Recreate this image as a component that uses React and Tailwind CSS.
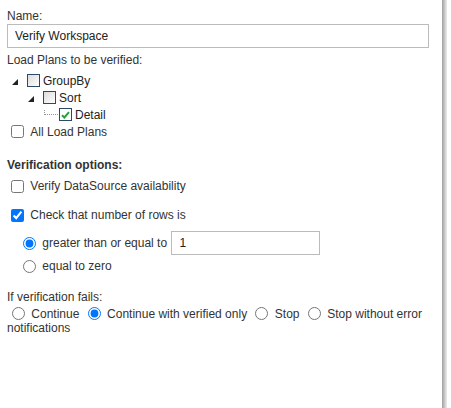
import React from "react";

const TreeBox = ({ checked }) => (
  <span
    className={`relative inline-flex h-[13px] w-[13px] shrink-0 items-center justify-center border border-[#2b4a6b] ${
      checked ? "bg-white" : "bg-gradient-to-br from-[#dcdcdc] to-[#ffffff]"
    }`}
  >
    {checked && (
      <svg width="9" height="8" viewBox="0 0 9 8">
        <path d="M1 4.2 L3.4 6.5 L8 1.2" fill="none" stroke="#22a33a" strokeWidth="2" />
      </svg>
    )}
  </span>
);

const Arrow = () => (
  <svg width="6" height="6" viewBox="0 0 6 6" className="shrink-0">
    <path d="M6 0 L6 6 L0 6 Z" fill="#222" />
  </svg>
);

const App = () => {
  return (
    <div className="flex h-[408px] w-[451px] bg-white font-['Liberation_Sans',Arial,sans-serif] text-[12px] leading-[14px] text-[#333]">
      {/* Form content */}
      <div className="w-[442px] px-[7px] pt-[9px]">
        <div>Name:</div>
        <input
          type="text"
          defaultValue="Verify Workspace"
          className="mt-px h-[24px] w-[422px] border border-[#bbb] px-[7px] text-[12px] text-[#222] outline-none"
        />

        <div className="mt-[5px]">Load Plans to be verified:</div>

        {/* Tree */}
        <div className="mt-[5px]">
          <div className="flex h-[17px] items-center pl-[5px]">
            <span className="mt-[3px] mr-[9px]"><Arrow /></span>
            <TreeBox />
            <span className="ml-[3px] text-[#222]">GroupBy</span>
          </div>
          <div className="flex h-[17px] items-center pl-[21px]">
            <span className="mt-[3px] mr-[9px]"><Arrow /></span>
            <TreeBox />
            <span className="ml-[3px] text-[#222]">Sort</span>
          </div>
          <div className="flex h-[17px] items-center pl-[37px]">
            <span className="mb-[4px] mr-px h-[5px] w-[14px] border-b border-l border-dotted border-[#999]" />
            <TreeBox checked />
            <span className="ml-[3px] text-[#222]">Detail</span>
          </div>
        </div>

        <label className="flex h-[17px] items-center">
          <input type="checkbox" className="m-[3px_3px_3px_4px] h-[13px] w-[13px]" />
          &nbsp;All Load Plans
        </label>

        <div className="mt-[18px] font-bold">Verification options:</div>

        <label className="mt-[6px] flex h-[16px] items-center">
          <input type="checkbox" className="m-[3px_3px_3px_4px] h-[13px] w-[13px]" />
          &nbsp;Verify DataSource availability
        </label>

        <label className="mt-[13px] flex h-[16px] items-center">
          <input type="checkbox" defaultChecked className="m-[3px_3px_3px_4px] h-[13px] w-[13px]" />
          &nbsp;Check that number of rows is
        </label>

        <div className="mt-[8px] flex h-[24px] items-center pl-[11px]">
          <input type="radio" name="cmp" defaultChecked className="m-[0_3px_0_5px] h-[13px] w-[13px]" />
          &nbsp;greater than or equal to&nbsp;
          <input
            type="text"
            defaultValue="1"
            className="ml-px h-[24px] w-[149px] border border-[#bbb] px-[7px] text-[12px] text-[#222] outline-none"
          />
        </div>

        <label className="mt-[3px] flex h-[16px] items-center pl-[11px]">
          <input type="radio" name="cmp" className="m-[0_3px_0_5px] h-[13px] w-[13px]" />
          &nbsp;equal to zero
        </label>

        <div className="mt-[16px]">If verification fails:</div>
        <div className="mt-[3px] pr-[8px]">
          <input type="radio" name="fail" className="m-[0_3px_0_5px] h-[13px] w-[13px] align-[-2px]" /> Continue{" "}
          <input type="radio" name="fail" defaultChecked className="m-[0_3px_0_5px] h-[13px] w-[13px] align-[-2px]" /> Continue with verified only{" "}
          <input type="radio" name="fail" className="m-[0_3px_0_5px] h-[13px] w-[13px] align-[-2px]" /> Stop{" "}
          <input type="radio" name="fail" className="m-[0_3px_0_5px] h-[13px] w-[13px] align-[-2px]" /> Stop without error notifications
        </div>
      </div>

      {/* Panel edge */}
      <div className="h-full w-[5px] bg-gradient-to-r from-[#a0a0a0] to-[#eeeeee]" />
    </div>
  );
};

export default App;
